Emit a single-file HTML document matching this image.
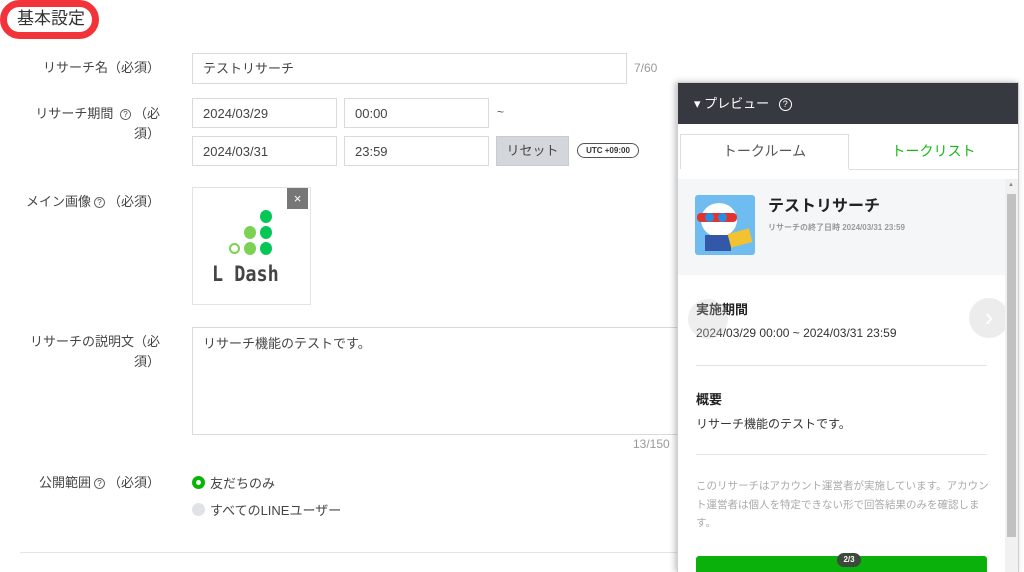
<!DOCTYPE html>
<html><head><meta charset="utf-8"><style>
*{box-sizing:border-box;margin:0;padding:0}
html,body{width:1024px;height:572px;overflow:hidden}
body{background:#fff;font-family:"Liberation Sans","Noto Sans CJK JP",sans-serif;color:#333;position:relative}
.a{position:absolute}
.lbl{position:absolute;font-size:13px;color:#444;text-align:right;width:150px;left:10px;line-height:20px}
.in{position:absolute;border:1px solid #d8dadd;background:#fff;font-size:13px;color:#444;padding-left:10px;line-height:29px}
.q{display:inline-block;width:11px;height:11px;border:1px solid #666;border-radius:50%;font-size:8px;line-height:9px;text-align:center;vertical-align:1px;margin:0 3px}
.dot{position:absolute;border-radius:50%}
</style></head><body>
<div class="a" style="left:0;top:0;width:99px;height:39px;border:7px solid #f2333a;border-radius:20px"></div>
<div class="a" style="left:17px;top:8px;font-size:17px;color:#333;line-height:22px">基本設定</div>

<div class="lbl" style="top:58px">リサーチ名（必須）</div>
<div class="in" style="left:192px;top:53px;width:435px;height:31px">テストリサーチ</div>
<div class="a" style="left:634px;top:61px;font-size:12px;color:#999">7/60</div>

<div class="lbl" style="top:104px">リサーチ期間 <span class="q">?</span>（必<br>須）</div>
<div class="in" style="left:192px;top:98px;width:145px;height:30px">2024/03/29</div>
<div class="in" style="left:344px;top:98px;width:145px;height:30px">00:00</div>
<div class="a" style="left:497px;top:105px;font-size:12px;color:#555">~</div>
<div class="in" style="left:192px;top:136px;width:145px;height:30px">2024/03/31</div>
<div class="in" style="left:344px;top:136px;width:145px;height:30px">23:59</div>
<div class="a" style="left:496px;top:136px;width:73px;height:30px;background:#d3d6db;border:1px solid #c8ccd1;font-size:13px;color:#444;text-align:center;line-height:28px">リセット</div>
<div class="a" style="left:577px;top:143px;width:62px;height:15px;border:1px solid #555;border-radius:8px;font-size:8px;font-weight:bold;text-align:center;line-height:13px;color:#333">UTC +09:00</div>

<div class="lbl" style="top:192px">メイン画像<span class="q">?</span>（必須）</div>
<div class="a" style="left:192px;top:187px;width:119px;height:118px;border:1px solid #e3e3e3"></div>
<div class="a" style="left:287px;top:188px;width:21px;height:21px;background:#777;color:#fff;font-size:13px;text-align:center;line-height:21px">×</div>
<div class="dot" style="left:260px;top:210px;width:12px;height:13px;background:#06c755"></div>
<div class="dot" style="left:244px;top:226px;width:12px;height:13px;background:#7bd151"></div>
<div class="dot" style="left:260px;top:226px;width:12px;height:13px;background:#06c755"></div>
<div class="dot" style="left:229px;top:243px;width:11px;height:11px;border:2px solid #7bd151"></div>
<div class="dot" style="left:244px;top:242px;width:12px;height:13px;background:#7bd151"></div>
<div class="dot" style="left:260px;top:242px;width:12px;height:13px;background:#06c755"></div>
<div class="a" style="left:212px;top:262px;font-family:'DejaVu Sans Mono',monospace;font-size:21px;font-weight:bold;color:#444;letter-spacing:0px;transform:scaleX(.88);transform-origin:left">L Dash</div>

<div class="lbl" style="top:332px">リサーチの説明文（必<br>須）</div>
<div class="a" style="left:192px;top:327px;width:500px;height:108px;border:1px solid #d8dadd;font-size:13px;color:#444;padding:5px 10px">リサーチ機能のテストです。</div>
<div class="a" style="left:633px;top:437px;font-size:12px;color:#999">13/150</div>

<div class="lbl" style="top:473px">公開範囲<span class="q">?</span>（必須）</div>
<div class="dot" style="left:192px;top:476px;width:13px;height:13px;border:4px solid #06b606;background:#fff"></div>
<div class="a" style="left:210px;top:473px;font-size:13px;color:#444">友だちのみ</div>
<div class="dot" style="left:192px;top:503px;width:13px;height:13px;background:#dfe2e6"></div>
<div class="a" style="left:210px;top:500px;font-size:13px;color:#444">すべてのLINEユーザー</div>
<div class="a" style="left:20px;top:552px;width:660px;height:1px;background:#e5e5e5"></div>

<!-- preview -->
<div class="a" style="left:677px;top:82px;width:342px;height:490px;background:#fff;border:1px solid #cfcfcf;border-bottom:none;box-shadow:-2px 0 6px rgba(0,0,0,.25);overflow:hidden">
 <div class="a" style="left:0;top:0;width:340px;height:41px;background:#363a40;color:#fff;font-size:13px;line-height:41px;padding-left:16px">▾ プレビュー <span style="display:inline-block;width:13px;height:13px;border:1.5px solid #fff;border-radius:50%;font-size:9px;line-height:10px;text-align:center;margin-left:6px;vertical-align:1px">?</span></div>
 <div class="a" style="left:2px;top:51px;width:169px;height:35px;border:1px solid #ddd;border-bottom:none;font-size:14px;color:#555;text-align:center;line-height:33px">トークルーム</div>
 <div class="a" style="left:171px;top:86px;width:169px;height:1px;background:#ddd"></div>
 <div class="a" style="left:171px;top:51px;width:169px;height:35px;font-size:14px;color:#19b819;text-align:center;line-height:35px">トークリスト</div>
 <div class="a" style="left:0;top:96px;width:327px;height:96px;background:#f5f6f8"></div>
 <div class="a" style="left:17px;top:112px;width:60px;height:60px;background:#6fbcf0;border-radius:3px;overflow:hidden">
  <div class="dot" style="left:6px;top:8px;width:36px;height:34px;background:#fff"></div>
  <div class="a" style="left:2px;top:18px;width:40px;height:9px;background:#e3332f;border-radius:4px"></div>
  <div class="dot" style="left:10px;top:18px;width:9px;height:9px;background:#2a8ee0"></div>
  <div class="dot" style="left:23px;top:18px;width:9px;height:9px;background:#2a8ee0"></div>
  <div class="a" style="left:10px;top:40px;width:26px;height:16px;background:#3358a8"></div>
  <div class="a" style="left:34px;top:36px;width:22px;height:14px;background:#f2c230;transform:rotate(-15deg)"></div>
 </div>
 <div class="a" style="left:90px;top:109px;font-size:16px;font-weight:bold;color:#222">テストリサーチ</div>
 <div class="a" style="left:90px;top:139px;font-size:8px;color:#999;font-weight:bold">リサーチの終了日時 2024/03/31 23:59</div>
 <div class="a" style="left:18px;top:216px;font-size:13px;font-weight:bold;color:#222">実施期間</div>
 <div class="a" style="left:18px;top:243px;font-size:12px;color:#333">2024/03/29 00:00 ~ 2024/03/31 23:59</div>
 <div class="a" style="left:18px;top:282px;width:291px;height:1px;background:#e3e3e3"></div>
 <div class="a" style="left:18px;top:306px;font-size:13px;font-weight:bold;color:#222">概要</div>
 <div class="a" style="left:18px;top:332px;font-size:12px;color:#333">リサーチ機能のテストです。</div>
 <div class="a" style="left:18px;top:371px;width:291px;height:1px;background:#e3e3e3"></div>
 <div class="a" style="left:18px;top:394px;width:294px;font-size:10.5px;color:#aaa;line-height:18.5px">このリサーチはアカウント運営者が実施しています。アカウント運営者は個人を特定できない形で回答結果のみを確認します。</div>
 <div class="a" style="left:18px;top:473px;width:291px;height:30px;background:#0bb10b;border-radius:3px"></div>
 <div class="a" style="left:159px;top:470px;width:24px;height:14px;background:#3b4a3b;border-radius:7px;color:#fff;font-size:8px;font-weight:bold;text-align:center;line-height:14px">2/3</div>
 <div class="dot" style="left:10px;top:216px;width:40px;height:40px;background:rgba(200,200,200,.3)"></div>
 <div class="dot" style="left:291px;top:215px;width:40px;height:40px;background:rgba(200,200,200,.35);color:#fff;font-size:26px;text-align:center;line-height:38px">›</div>
 <div class="a" style="left:327px;top:96px;width:13px;height:404px;background:#f1f1f1"></div>
 <div class="a" style="left:329px;top:111px;width:9px;height:343px;background:#c1c1c1"></div>
 <div class="a" style="left:330px;top:99px;font-size:6px;color:#888">▲</div>
</div>
</body></html>
